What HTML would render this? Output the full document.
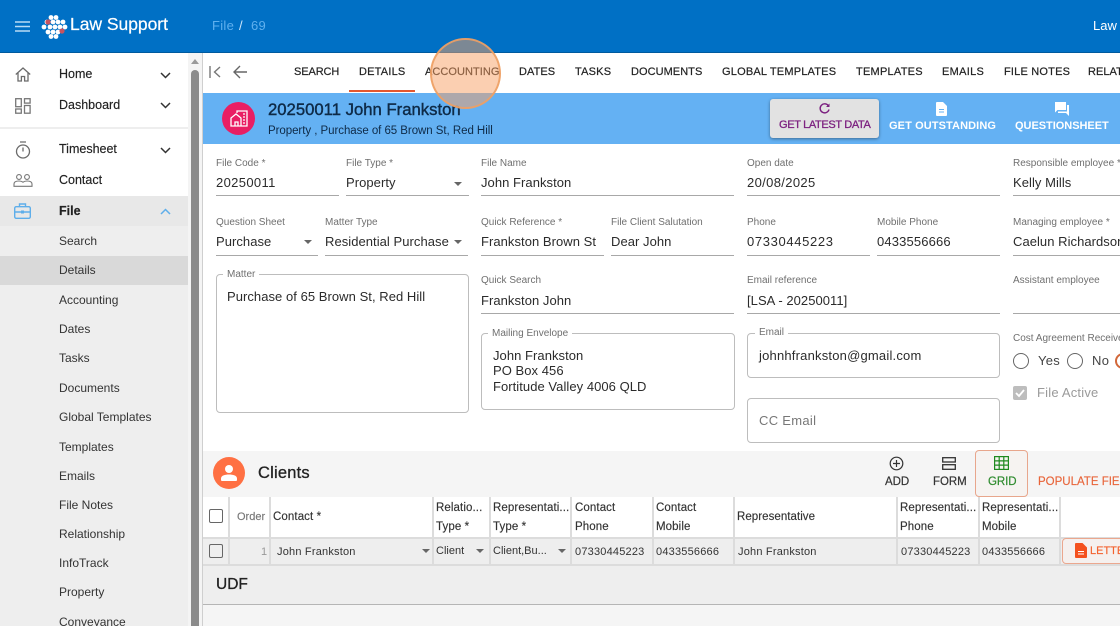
<!DOCTYPE html>
<html><head><meta charset="utf-8">
<style>
html,body{margin:0;padding:0;width:1120px;height:626px;overflow:hidden;background:#fff}
body{position:relative;font-family:"Liberation Sans",Arial,sans-serif;color:#222}
.a,.t,.l,.v,.u,.m,.h,.c{position:absolute}
.t,.l,.v,.m,.h,.c{white-space:nowrap;line-height:16px}
.l{font-size:10px;color:#6f6f6f;margin-top:1px}
.v{font-size:13px;color:#2b2b2b;letter-spacing:.05px}
.v.n{letter-spacing:.35px}
.u{height:1px;background:#a8a8a8}
.m{font-size:12px;color:#333;left:59px}
.m.b{font-size:12.5px;color:#222;-webkit-text-stroke:.15px #222}
.h{font-size:11px;color:#222;top:64px;-webkit-text-stroke:.2px #222;letter-spacing:.05px}
.c{font-size:11px;color:#333;margin-top:1px}
.c.hd{font-size:11.5px;letter-spacing:.1px;-webkit-text-stroke:.15px #333;margin-top:2px}
.c.d{letter-spacing:.2px}
.box{position:absolute;border:1px solid #bdbdbd;border-radius:4px;box-sizing:border-box}
.lg{position:absolute;background:#fff;padding:0 4px;font-size:10px;line-height:12px;color:#6f6f6f;margin-top:1px}
.tri{position:absolute;width:0;height:0;border-left:4.5px solid transparent;border-right:4.5px solid transparent;border-top:4.5px solid #666}
.tri.s{border-left-width:4px;border-right-width:4px;border-top-width:4px}
.col{position:absolute;width:2px;background:#dcdcdc;top:497px;height:68px}
svg{position:absolute;overflow:visible}
</style></head><body>

<!-- top bar -->
<div class="a" style="left:0;top:0;width:1120px;height:53px;background:#0070c5;border-bottom:1px solid #005a9e;box-sizing:border-box"></div>
<svg style="left:15px;top:21px" width="15" height="11"><path d="M0 1h15M0 5.500h15M0 10h15" stroke="#b9dcf5" stroke-width="1.600"/></svg>
<svg style="left:42px;top:15px" width="26" height="24" viewBox="0 0 26 24"><g fill="#fff"><circle cx="9" cy="2.500" r="2.400"/><circle cx="14" cy="2.500" r="2.400"/><circle cx="5" cy="7" r="2.400"/><circle cx="11" cy="7" r="2.400"/><circle cx="16" cy="7" r="2.400"/><circle cx="21" cy="7" r="2.400"/><circle cx="2" cy="12" r="2.400"/><circle cx="8" cy="12" r="2.400"/><circle cx="13" cy="12" r="2.400"/><circle cx="18" cy="12" r="2.400"/><circle cx="23" cy="12" r="2.400"/><circle cx="6" cy="17" r="2.400"/><circle cx="11" cy="17" r="2.400"/><circle cx="16" cy="17" r="2.400"/><circle cx="9" cy="21.500" r="2.400"/><circle cx="14" cy="21.500" r="2.400"/></g><circle cx="6" cy="7" r="2.600" fill="#c9535f"/><circle cx="20" cy="16" r="2.600" fill="#c9535f"/></svg>
<div class="t" style="left:70px;top:14px;line-height:20px;font-size:17.500px;color:#fff;letter-spacing:-.03px;-webkit-text-stroke:.2px #fff">Law Support</div>
<div class="t" style="left:212px;top:18px;font-size:13px;color:#5fb0ee;letter-spacing:.3px">File</div>
<div class="t" style="left:239px;top:18px;font-size:13px;color:#cfe7fa">/</div>
<div class="t" style="left:251px;top:18px;font-size:13px;color:#5fb0ee;letter-spacing:.3px">69</div>
<div class="t" style="left:1093px;top:18px;font-size:13px;color:#fff">Law</div>

<!-- sidebar -->
<div class="a" style="left:0;top:127px;width:188px;height:2px;background:#eee"></div>
<div class="a" style="left:0;top:196px;width:188px;height:30px;background:#e8e8e8"></div>
<div class="a" style="left:0;top:226px;width:188px;height:400px;background:#eeeeee"></div>
<div class="a" style="left:0;top:256px;width:188px;height:29px;background:#d9d9d9"></div>
<div class="a" style="left:188px;top:53px;width:14px;height:573px;background:#f4f4f4"></div>
<div class="a" style="left:191px;top:70px;width:8px;height:556px;background:#8b8b8b;border-radius:4px 4px 0 0"></div>
<div class="a" style="left:191px;top:59px;width:0;height:0;border-left:4px solid transparent;border-right:4px solid transparent;border-bottom:5px solid #9a9a9a"></div>
<div class="a" style="left:202px;top:53px;width:1px;height:573px;background:#cfcfcf"></div>

<svg style="left:15px;top:67px" width="16" height="15" fill="none" stroke="#6b6b6b" stroke-width="1.300"><path d="M.8 7.500 8 1l7.200 6.500M3 6v8h3.400V9.500h3.200V14H13V6"/></svg>
<svg style="left:15px;top:98px" width="16" height="16" fill="none" stroke="#777" stroke-width="1.300"><rect x=".7" y=".7" width="5.600" height="8"/><rect x="9.500" y=".7" width="5.600" height="4.400"/><rect x=".7" y="11" width="5.600" height="4.200"/><rect x="9.500" y="7.500" width="5.600" height="7.700"/></svg>
<svg style="left:15px;top:141px" width="16" height="18" fill="none" stroke="#6b6b6b" stroke-width="1.300"><circle cx="8" cy="10.500" r="6.500"/><path d="M5 1h6M8 6.500v4"/></svg>
<svg style="left:13px;top:174px" width="20" height="13" fill="none" stroke="#777" stroke-width="1.100"><circle cx="6" cy="3" r="2.400"/><circle cx="14" cy="3" r="2.400"/><path d="M1 12.300V10c0-2 2-3 5-3 1.500 0 3 .4 4 1.200C11 7.400 12.500 7 14 7c3 0 5 1 5 3v2.300z"/></svg>
<svg style="left:14px;top:203px" width="17" height="16" fill="none" stroke="#5eaeea" stroke-width="1.400"><rect x=".7" y="3.700" width="15.600" height="11.600" rx="1.500"/><path d="M5.500 3.700V1h6v2.700M.7 9h15.600"/><rect x="7" y="7.500" width="3" height="3" fill="#5eaeea" stroke="none"/></svg>

<div class="m b" style="top:66px">Home</div>
<div class="m b" style="top:97px">Dashboard</div>
<div class="m b" style="top:141px">Timesheet</div>
<div class="m b" style="top:172px">Contact</div>
<div class="m b" style="top:203px;font-weight:bold;color:#222">File</div>
<svg style="left:160px;top:72px" width="11" height="7" fill="none" stroke="#333" stroke-width="1.500"><path d="M1 1l4.500 4.500L10 1"/></svg>
<svg style="left:160px;top:102px" width="11" height="7" fill="none" stroke="#333" stroke-width="1.500"><path d="M1 1l4.500 4.500L10 1"/></svg>
<svg style="left:160px;top:147px" width="11" height="7" fill="none" stroke="#333" stroke-width="1.500"><path d="M1 1l4.500 4.500L10 1"/></svg>
<svg style="left:160px;top:208px" width="11" height="7" fill="none" stroke="#5eaeea" stroke-width="1.500"><path d="M1 6l4.500-4.500L10 6"/></svg>

<div class="m" style="top:233px">Search</div>
<div class="m" style="top:262px">Details</div>
<div class="m" style="top:292px">Accounting</div>
<div class="m" style="top:321px">Dates</div>
<div class="m" style="top:350px">Tasks</div>
<div class="m" style="top:380px">Documents</div>
<div class="m" style="top:409px">Global Templates</div>
<div class="m" style="top:439px">Templates</div>
<div class="m" style="top:468px">Emails</div>
<div class="m" style="top:497px">File Notes</div>
<div class="m" style="top:526px">Relationship</div>
<div class="m" style="top:555px">InfoTrack</div>
<div class="m" style="top:584px">Property</div>
<div class="m" style="top:614px">Conveyance</div>

<!-- tabs -->
<svg style="left:209px;top:66px" width="12" height="12" fill="none" stroke="#777" stroke-width="1.400"><path d="M1 0v12M11 1 5.500 6 11 11"/></svg>
<svg style="left:233px;top:65px" width="14" height="14" fill="none" stroke="#666" stroke-width="1.400"><path d="M14 7H1M7 1 1 7l6 6"/></svg>
<div class="h" style="left:294px;letter-spacing:-.1px">SEARCH</div>
<div class="h" style="left:359px;letter-spacing:.2px">DETAILS</div>
<div class="h" style="left:425px">ACCOUNTING</div>
<div class="h" style="left:519px">DATES</div>
<div class="h" style="left:575px;letter-spacing:.2px">TASKS</div>
<div class="h" style="left:631px">DOCUMENTS</div>
<div class="h" style="left:722px;letter-spacing:.2px">GLOBAL TEMPLATES</div>
<div class="h" style="left:856px;letter-spacing:.25px">TEMPLATES</div>
<div class="h" style="left:942px;letter-spacing:.3px">EMAILS</div>
<div class="h" style="left:1004px;letter-spacing:.2px">FILE NOTES</div>
<div class="h" style="left:1088px">RELAT</div>
<div class="a" style="left:349px;top:90px;width:66px;height:2px;background:#e3572f"></div>

<!-- blue header -->
<div class="a" style="left:203px;top:93px;width:917px;height:51px;background:#64b1f3"></div>
<div class="a" style="left:222px;top:102px;width:33px;height:33px;border-radius:50%;background:#e91e63"></div>
<svg style="left:230px;top:110px" width="18" height="17" fill="none" stroke="#fff" stroke-width="1.300"><path d="M7 3V1h10v15H1V8l5-4 5 4v8M5 16v-4h3v4M13 4h2M13 7h2M13 10h2M13 13h2"/></svg>
<div class="t" style="left:268px;top:100px;line-height:20px;font-size:16.700px;color:#0e2a47;-webkit-text-stroke:.4px #0e2a47">20250011 John Frankston</div>
<div class="t" style="left:268px;top:123px;font-size:11.500px;color:#0e2a47;letter-spacing:-.05px">Property , Purchase of 65 Brown St, Red Hill</div>

<div class="a" style="left:770px;top:99px;width:109px;height:39px;background:#e2e2e2;border-radius:3px;box-shadow:0 1px 3px rgba(0,0,0,.4)"></div>
<svg style="left:819px;top:103px" width="11" height="11" fill="none" stroke="#7b1f7f" stroke-width="1.400"><path d="M9.500 3A4.500 4.500 0 1 0 10 6.500"/><path d="M10.500 .5v3.500H7" fill="#7b1f7f" stroke="none"/></svg>
<div class="t" style="left:779px;top:117px;font-size:11px;color:#7b1f7f;letter-spacing:-.35px;-webkit-text-stroke:.3px #7b1f7f">GET LATEST DATA</div>
<svg style="left:936px;top:102px" width="11" height="14"><path d="M1 0h6l4 4v9a1 1 0 0 1-1 1H1a1 1 0 0 1-1-1V1a1 1 0 0 1 1-1z" fill="#fff"/><path d="M3 7.500h5M3 10h5" stroke="#64b1f3"/></svg>
<div class="t" style="left:889px;top:118px;font-size:11px;font-weight:bold;color:#fff;letter-spacing:.1px">GET OUTSTANDING</div>
<svg style="left:1055px;top:102px" width="14" height="14"><path d="M0 0h11v8H2.500L0 10.500z" fill="#fff"/><path d="M12 3h2v11l-3-3H3V9.500h9z" fill="#fff"/></svg>
<div class="t" style="left:1015px;top:118px;font-size:11px;font-weight:bold;color:#fff;letter-spacing:-.03px">QUESTIONSHEET</div>

<!-- row 1 -->
<div class="l" style="left:216px;top:155px">File Code *</div><div class="v n" style="left:216px;top:175px">20250011</div><div class="u" style="left:216px;top:195px;width:123px"></div>
<div class="l" style="left:346px;top:155px">File Type *</div><div class="v" style="left:346px;top:175px">Property</div><div class="u" style="left:346px;top:195px;width:123px"></div><div class="tri" style="left:454px;top:182px"></div>
<div class="l" style="left:481px;top:155px">File Name</div><div class="v" style="left:481px;top:175px">John Frankston</div><div class="u" style="left:481px;top:195px;width:253px"></div>
<div class="l" style="left:747px;top:155px">Open date</div><div class="v n" style="left:747px;top:175px">20/08/2025</div><div class="u" style="left:747px;top:195px;width:253px"></div>
<div class="l" style="left:1013px;top:155px">Responsible employee *</div><div class="v" style="left:1013px;top:175px">Kelly Mills</div><div class="u" style="left:1013px;top:195px;width:107px"></div>

<!-- row 2 -->
<div class="l" style="left:216px;top:214px">Question Sheet</div><div class="v" style="left:216px;top:234px">Purchase</div><div class="u" style="left:216px;top:255px;width:102px"></div><div class="tri" style="left:304px;top:240px"></div>
<div class="l" style="left:325px;top:214px">Matter Type</div><div class="v" style="left:325px;top:234px">Residential Purchase</div><div class="u" style="left:325px;top:255px;width:143px"></div><div class="tri" style="left:454px;top:240px"></div>
<div class="l" style="left:481px;top:214px">Quick Reference *</div><div class="v" style="left:481px;top:234px">Frankston Brown St</div><div class="u" style="left:481px;top:255px;width:123px"></div>
<div class="l" style="left:611px;top:214px">File Client Salutation</div><div class="v" style="left:611px;top:234px">Dear John</div><div class="u" style="left:611px;top:255px;width:123px"></div>
<div class="l" style="left:747px;top:214px">Phone</div><div class="v" style="left:747px;top:234px;letter-spacing:.65px">07330445223</div><div class="u" style="left:747px;top:255px;width:123px"></div>
<div class="l" style="left:877px;top:214px">Mobile Phone</div><div class="v" style="left:877px;top:234px;letter-spacing:.15px">0433556666</div><div class="u" style="left:877px;top:255px;width:123px"></div>
<div class="l" style="left:1013px;top:214px">Managing employee *</div><div class="v" style="left:1013px;top:234px">Caelun Richardson</div><div class="u" style="left:1013px;top:255px;width:107px"></div>

<!-- row 3 -->
<div class="box" style="left:216px;top:274px;width:253px;height:139px"></div>
<div class="lg" style="left:223px;top:268px">Matter</div>
<div class="v" style="left:227px;top:289px">Purchase of 65 Brown St, Red Hill</div>

<div class="l" style="left:481px;top:272px">Quick Search</div><div class="v" style="left:481px;top:293px">Frankston John</div><div class="u" style="left:481px;top:313px;width:253px"></div>
<div class="l" style="left:747px;top:272px">Email reference</div><div class="v" style="left:747px;top:293px">[LSA - 20250011]</div><div class="u" style="left:747px;top:313px;width:253px"></div>
<div class="l" style="left:1013px;top:272px">Assistant employee</div><div class="u" style="left:1013px;top:313px;width:107px"></div>

<div class="box" style="left:481px;top:333px;width:254px;height:77px"></div>
<div class="lg" style="left:488px;top:327px">Mailing Envelope</div>
<div class="v" style="left:493px;top:348px">John Frankston</div>
<div class="v" style="left:493px;top:363px">PO Box 456</div>
<div class="v" style="left:493px;top:379px">Fortitude Valley 4006 QLD</div>

<div class="box" style="left:747px;top:333px;width:253px;height:45px"></div>
<div class="lg" style="left:755px;top:326px">Email</div>
<div class="v" style="left:759px;top:348px;letter-spacing:.2px">johnhfrankston@gmail.com</div>
<div class="box" style="left:747px;top:398px;width:253px;height:45px"></div>
<div class="v" style="left:759px;top:413px;color:#777;letter-spacing:.3px">CC Email</div>

<div class="l" style="left:1013px;top:330px">Cost Agreement Received</div>
<div class="a" style="left:1013px;top:353px;width:16px;height:16px;box-sizing:border-box;border:1.300px solid #666;border-radius:50%"></div>
<div class="v" style="left:1038px;top:353px;color:#444;letter-spacing:.3px">Yes</div>
<div class="a" style="left:1067px;top:353px;width:16px;height:16px;box-sizing:border-box;border:1.300px solid #666;border-radius:50%"></div>
<div class="v" style="left:1092px;top:353px;color:#444;letter-spacing:.3px">No</div>
<div class="a" style="left:1115px;top:353px;width:16px;height:16px;box-sizing:border-box;border:2px solid #d2683a;border-radius:50%"></div>
<div class="a" style="left:1013px;top:386px;width:14px;height:14px;background:#bdbdbd;border-radius:2px"></div>
<svg style="left:1015px;top:388px" width="10" height="10" fill="none" stroke="#fff" stroke-width="1.800"><path d="M1 5l3 3 5-6"/></svg>
<div class="v" style="left:1037px;top:385px;color:#9a9a9a;letter-spacing:.2px">File Active</div>

<!-- clients -->
<div class="a" style="left:203px;top:451px;width:917px;height:46px;background:#f5f5f5"></div>
<div class="a" style="left:213px;top:457px;width:32px;height:32px;border-radius:50%;background:#ff7043"></div>
<svg style="left:220px;top:464px" width="18" height="18" fill="#fff"><circle cx="9" cy="5" r="4"/><path d="M1 16v-1.500C1 11.500 5 10.500 9 10.500s8 1 8 4V16a1 1 0 0 1-1 1H2a1 1 0 0 1-1-1z"/></svg>
<div class="t" style="left:258px;top:464px;line-height:18px;font-size:16.500px;color:#222;-webkit-text-stroke:.3px #222;letter-spacing:.2px">Clients</div>

<svg style="left:889px;top:456px" width="15" height="15" fill="none" stroke="#333" stroke-width="1.200"><circle cx="7.500" cy="7.500" r="6.300"/><path d="M7.500 4v7M4 7.500h7"/></svg>
<div class="t" style="left:885px;top:474px;font-size:11.500px;color:#333;-webkit-text-stroke:.2px #333;letter-spacing:-.05px">ADD</div>
<svg style="left:942px;top:457px" width="14" height="13" fill="none" stroke="#333" stroke-width="1.300"><rect x=".7" y=".7" width="12.600" height="4.300"/><rect x=".7" y="7.700" width="12.600" height="4.600"/></svg>
<div class="t" style="left:933px;top:474px;font-size:11.500px;color:#333;-webkit-text-stroke:.2px #333;letter-spacing:-.05px">FORM</div>
<div class="a" style="left:975px;top:450px;width:53px;height:47px;box-sizing:border-box;border:1px solid #e8a68c;border-radius:4px;background:#f6f3f1"></div>
<svg style="left:994px;top:456px" width="15" height="14" fill="none" stroke="#1f8a1f" stroke-width="1.200"><rect x=".6" y=".6" width="13.800" height="12.800"/><path d="M5.200 .6v12.800M9.800 .6v12.800M.6 4.900h13.800M.6 9.100h13.800"/></svg>
<div class="t" style="left:988px;top:474px;font-size:11.500px;color:#2e8b2e;-webkit-text-stroke:.2px #2e8b2e;letter-spacing:-.05px">GRID</div>
<div class="t" style="left:1038px;top:474px;font-size:11.500px;color:#e8653a;-webkit-text-stroke:.15px #e8653a">POPULATE FIELDS</div>

<!-- table -->
<div class="a" style="left:203px;top:497px;width:917px;height:40px;background:#fff"></div>
<div class="a" style="left:203px;top:537px;width:917px;height:2px;background:#dcdcdc"></div>
<div class="a" style="left:203px;top:539px;width:917px;height:65px;background:#eeeeee"></div>
<div class="a" style="left:203px;top:564px;width:917px;height:2px;background:#dcdcdc"></div>
<div class="a" style="left:203px;top:604px;width:917px;height:1px;background:#b5b5b5"></div>
<div class="a" style="left:203px;top:605px;width:917px;height:21px;background:#f5f5f5"></div>
<div class="col" style="left:228px"></div><div class="col" style="left:269px"></div><div class="col" style="left:432px"></div><div class="col" style="left:489px"></div><div class="col" style="left:570px"></div><div class="col" style="left:652px"></div><div class="col" style="left:733px"></div><div class="col" style="left:896px"></div><div class="col" style="left:978px"></div><div class="col" style="left:1059px"></div>

<div class="a" style="left:209px;top:509px;width:14px;height:14px;box-sizing:border-box;border:1.500px solid #666;border-radius:2px"></div>
<div class="a" style="left:209px;top:544px;width:14px;height:14px;box-sizing:border-box;border:1.500px solid #666;border-radius:2px"></div>
<div class="c" style="left:237px;top:508px;color:#777;-webkit-text-stroke:.15px #777">Order</div>
<div class="c hd" style="left:273px;top:507px">Contact *</div>
<div class="c hd" style="left:436px;top:498px">Relatio...</div><div class="c hd" style="left:436px;top:517px">Type *</div>
<div class="c hd" style="left:493px;top:498px">Representati...</div><div class="c hd" style="left:493px;top:517px">Type *</div>
<div class="c hd" style="left:575px;top:498px">Contact</div><div class="c hd" style="left:575px;top:517px">Phone</div>
<div class="c hd" style="left:656px;top:498px">Contact</div><div class="c hd" style="left:656px;top:517px">Mobile</div>
<div class="c hd" style="left:737px;top:507px;letter-spacing:.05px">Representative</div>
<div class="c hd" style="left:900px;top:498px">Representati...</div><div class="c hd" style="left:900px;top:517px">Phone</div>
<div class="c hd" style="left:982px;top:498px">Representati...</div><div class="c hd" style="left:982px;top:517px">Mobile</div>

<div class="c" style="left:261px;top:543px;color:#999">1</div>
<div class="c d" style="left:277px;top:543px">John Frankston</div><div class="tri s" style="left:422px;top:549px"></div>
<div class="c" style="left:436px;top:542px">Client</div><div class="tri s" style="left:476px;top:549px"></div>
<div class="c" style="left:493px;top:542px">Client,Bu...</div><div class="tri s" style="left:558px;top:549px"></div>
<div class="c d" style="left:575px;top:543px">07330445223</div>
<div class="c d" style="left:656px;top:543px">0433556666</div>
<div class="c d" style="left:738px;top:543px">John Frankston</div>
<div class="c d" style="left:901px;top:543px">07330445223</div>
<div class="c d" style="left:982px;top:543px">0433556666</div>
<div class="a" style="left:1062px;top:538px;width:70px;height:26px;box-sizing:border-box;border:1px solid #eba78e;border-radius:4px;background:#f5f0ee"></div>
<svg style="left:1075px;top:543px" width="12" height="15"><path d="M1 0h6.500L12 4.500V14a1 1 0 0 1-1 1H1a1 1 0 0 1-1-1V1a1 1 0 0 1 1-1z" fill="#f4511e"/><path d="M3 8.500h6M3 11h6" stroke="#fff"/></svg>
<div class="c" style="left:1090px;top:542px;color:#f4622e;-webkit-text-stroke:.15px #f4622e">LETTER</div>

<div class="t" style="left:216px;top:576px;line-height:18px;font-size:15.500px;color:#222;-webkit-text-stroke:.3px #222">UDF</div>

<!-- click highlight -->
<div class="a" style="left:430px;top:38px;width:71px;height:71px;box-sizing:border-box;border-radius:50%;background:rgba(248,160,100,.5);border:2px solid rgba(238,160,100,.9)"></div>
</body></html>
